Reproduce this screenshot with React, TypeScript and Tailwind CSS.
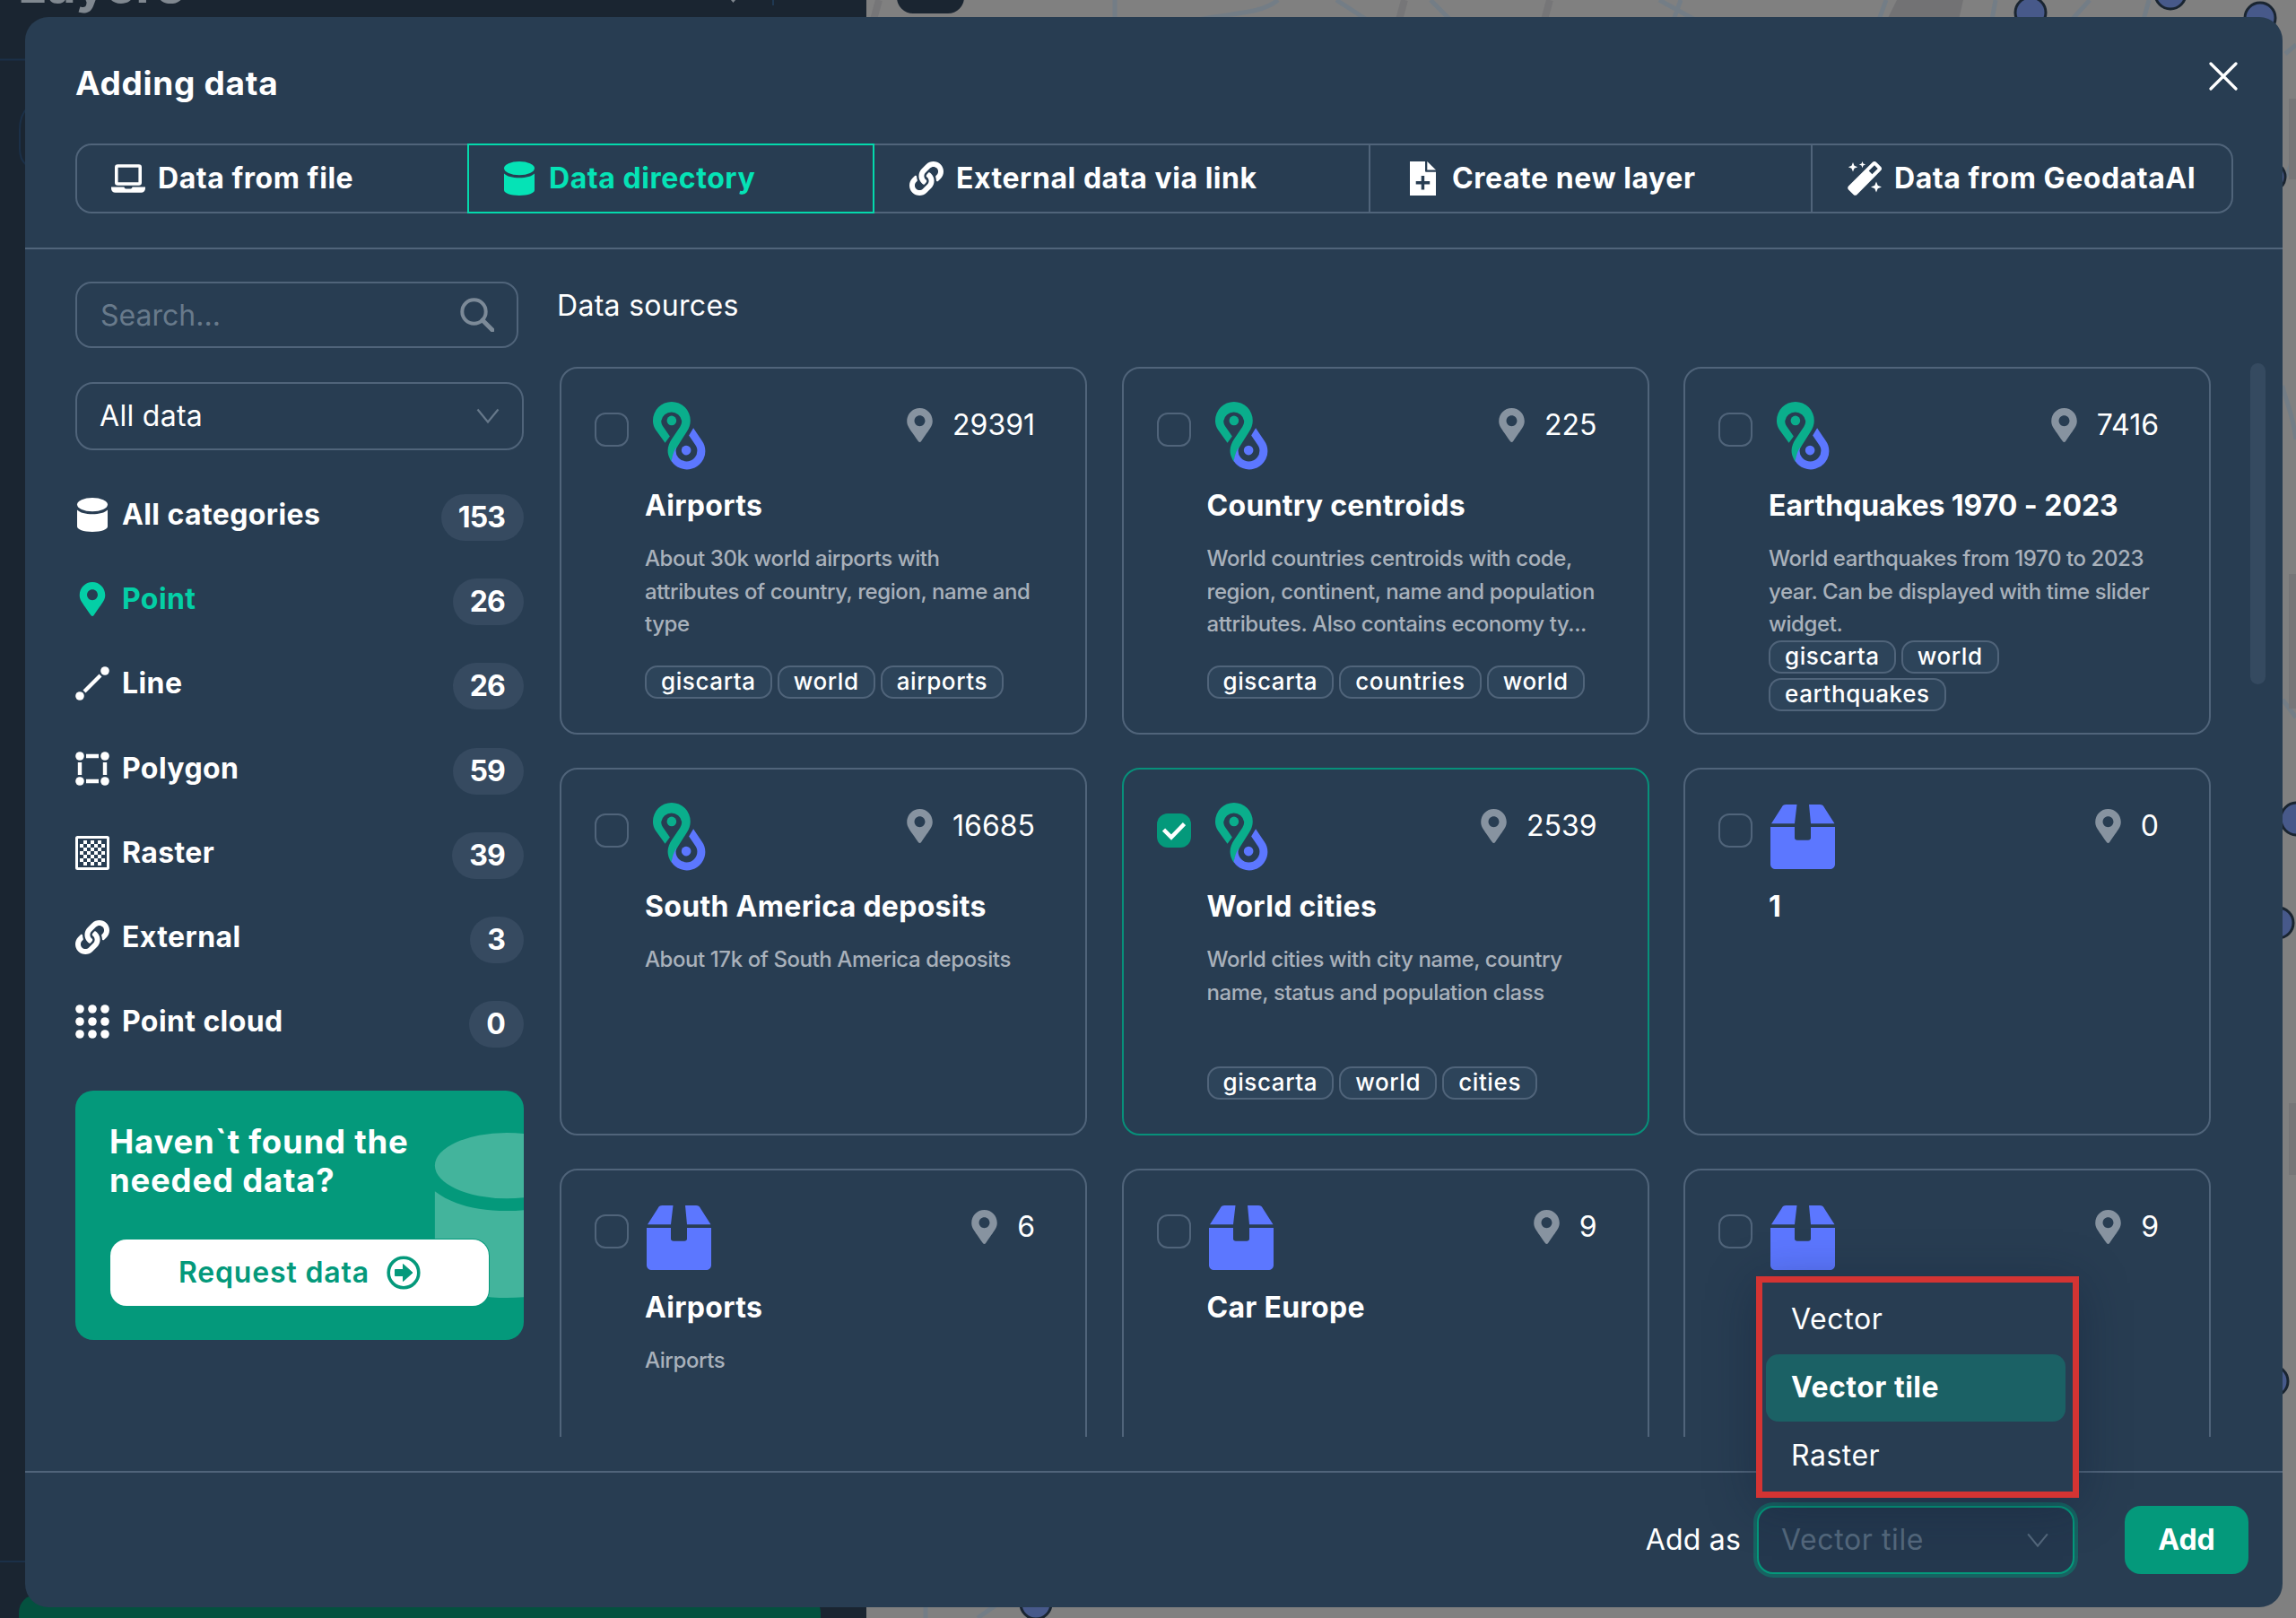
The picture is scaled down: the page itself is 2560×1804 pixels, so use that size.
import type { ReactNode } from 'react';
import clsx from 'clsx';
import { FaLink, FaMapMarkerAlt } from 'react-icons/fa';

type IconProps = { className?: string };

function DatabaseIcon({ className }: IconProps) {
  return (
    <svg className={className} viewBox="0 0 38 38" fill="currentColor">
      <ellipse cx="19" cy="7.6" rx="17" ry="7.6" />
      <path d="M2 13.5c3 3.200 9.500 4.800 17 4.800s14-1.600 17-4.800V32c0 3.200-7 6-17 6S2 35.200 2 32z" />
    </svg>
  );
}

function LaptopIcon({ className }: IconProps) {
  return (
    <svg className={className} viewBox="0 0 38 38">
      <rect x="5.800" y="5" width="26.400" height="20" rx="1.500" fill="none" stroke="currentColor" strokeWidth="3.600" />
      <path fill="currentColor" d="M0 28.500h14.500c0 1.300 1 2 2 2h5c1 0 2-.7 2-2H38V30c0 2.800-2 4.800-4.600 4.800H4.600C2 34.800 0 32.800 0 30z" />
    </svg>
  );
}

function FilePlusIcon({ className }: IconProps) {
  return (
    <svg className={className} viewBox="0 0 38 38" fill="currentColor">
      <path
        fillRule="evenodd"
        d="M5 0h17v10.500c0 .8.500 1.300 1.300 1.300H34V38H5zM17.700 16v6h-6v3.500h6v6h3.500v-6h6V22h-6v-6z"
      />
      <path d="M24.300 0 34 9.600h-9.700z" />
    </svg>
  );
}

function WandIcon({ className }: IconProps) {
  return (
    <svg className={className} viewBox="0 0 38 38" fill="currentColor">
      <path
        fillRule="evenodd"
        d="M28 .8c1.200-1.100 2.700-1.100 3.900 0l5.300 5.300c1.100 1.200 1.100 2.700 0 3.900L10.500 36.900c-1.200 1.200-2.700 1.200-3.900 0L1 31.400c-1.100-1.200-1.100-2.700 0-3.900zM30 4.300l-6.300 6.300 3.700 3.700 6.300-6.300z"
      />
      <path d="m6 1 1.500 3.700L11.200 6.200 7.500 7.700 6 11.400 4.500 7.700.8 6.200l3.700-1.500zM16.500 0l1 2.600 2.600 1-2.600 1-1 2.600-1-2.600-2.600-1 2.600-1zM32 22.500l1.700 4.300 4.300 1.700-4.300 1.700L32 34.500l-1.700-4.300L26 28.500l4.300-1.700z" />
    </svg>
  );
}

function LineIcon({ className }: IconProps) {
  return (
    <svg className={className} viewBox="0 0 38 38" fill="currentColor">
      <circle cx="5" cy="33" r="4.800" />
      <circle cx="33" cy="5" r="4.800" />
      <path d="M10 28 28 10" stroke="currentColor" strokeWidth="4.200" />
    </svg>
  );
}

function PolygonIcon({ className }: IconProps) {
  return (
    <svg className={className} viewBox="0 0 38 38" fill="currentColor">
      <circle cx="5" cy="5" r="4.800" />
      <circle cx="33" cy="5" r="4.800" />
      <circle cx="5" cy="33" r="4.800" />
      <circle cx="33" cy="33" r="4.800" />
      <path d="M12 5h14M12 33h14M5 12v14M33 12v14" stroke="currentColor" strokeWidth="4.400" />
    </svg>
  );
}

function RasterIcon({ className }: IconProps) {
  const cells: ReactNode[] = [];
  for (let row = 0; row < 7; row++) {
    for (let col = 0; col < 7; col++) {
      if ((row + col) % 2 === 1) {
        cells.push(<rect key={`${row}-${col}`} x={5 + col * 4} y={5 + row * 4} width="4" height="4" />);
      }
    }
  }
  return (
    <svg className={className} viewBox="0 0 38 38" fill="currentColor">
      <rect x="1.500" y="1.500" width="35" height="35" rx="1" fill="none" stroke="currentColor" strokeWidth="3" />
      {cells}
    </svg>
  );
}

function PointCloudIcon({ className }: IconProps) {
  return (
    <svg className={className} viewBox="0 0 38 38" fill="currentColor">
      {[5, 19, 33].map((y) => [5, 19, 33].map((x) => <circle key={`${x}-${y}`} cx={x} cy={y} r="4.800" />))}
    </svg>
  );
}

function SearchIcon({ className }: IconProps) {
  return (
    <svg className={className} viewBox="0 0 38 38" fill="none" stroke="currentColor" strokeWidth="4">
      <circle cx="15.500" cy="15.500" r="13.200" />
      <path d="m25 25 11 11" strokeWidth="5" strokeLinecap="round" />
    </svg>
  );
}

function ChevronIcon({ className }: IconProps) {
  return (
    <svg className={className} viewBox="0 0 26 18" fill="none" stroke="currentColor" strokeWidth="2.200">
      <path d="m1.500 1.500 11.500 14 11.500-14" />
    </svg>
  );
}

function ArrowCircleIcon({ className }: IconProps) {
  return (
    <svg className={className} viewBox="0 0 38 38">
      <circle cx="19" cy="19" r="16.800" fill="none" stroke="currentColor" strokeWidth="3.600" />
      <path d="M9.500 15.500h9v-6L29 19 18.500 28.500v-6h-9z" fill="currentColor" stroke="currentColor" strokeLinejoin="round" />
    </svg>
  );
}

function GiscartaLogo({ className }: IconProps) {
  return (
    <svg className={className} viewBox="40 36 182 232">
      <path
        fill="#0aae8c"
        d="M83 177 52 134c-6-9-10-20-10-32a63 63 0 0 1 126 0c0 14-5 26-12 37l-30 48c-12 20-17 34-22 53-8-13-12-26-12-37 0-14 6-27 13-38l28-42c4-6 6-13 6-20a35 35 0 0 0-69 0c0 7 2 13 6 19l23 33z"
      />
      <circle cx="105" cy="102" r="16" fill="#0aae8c" />
      <path
        fill="#5c77ff"
        d="m178 127 29 43c7 10 11 21 11 35A62 62 0 0 1 104 238c4-19 8-33 17-47-1 4-2 8-2 12a36 36 0 0 0 72 0c0-8-3-14-7-20l-21-31z"
      />
      <circle cx="154" cy="202" r="16" fill="#5c77ff" />
    </svg>
  );
}

function BoxIcon({ className }: IconProps) {
  return (
    <svg className={className} viewBox="0 0 72 78" preserveAspectRatio="none" fill="#5c77ff">
      <path d="M12.500 3.500C13.500 1 15 0 17.500 0h12l-2.500 23H1zM43 0h12c2.500 0 4 1 5 3.500L71.500 23H45z" />
      <path d="M0 27h27v13c0 2 1.200 3 3 3h12c1.800 0 3-1 3-3V27h27v45c0 3.500-2.500 6-6 6H6c-3.500 0-6-2.500-6-6z" />
    </svg>
  );
}

const tabs = [
  { label: 'Data from file', icon: LaptopIcon, width: 'w-[437px]' },
  { label: 'Data directory', icon: DatabaseIcon, width: 'w-[454px]', active: true },
  { label: 'External data via link', icon: FaLink, width: 'w-[553px]' },
  { label: 'Create new layer', icon: FilePlusIcon, width: 'w-[493px]' },
  { label: 'Data from GeodataAI', icon: WandIcon, width: 'flex-1' },
];

const categories = [
  { label: 'All categories', count: 153, icon: DatabaseIcon },
  { label: 'Point', count: 26, icon: FaMapMarkerAlt, active: true },
  { label: 'Line', count: 26, icon: LineIcon },
  { label: 'Polygon', count: 59, icon: PolygonIcon },
  { label: 'Raster', count: 39, icon: RasterIcon },
  { label: 'External', count: 3, icon: FaLink },
  { label: 'Point cloud', count: 0, icon: PointCloudIcon },
];

type Source = {
  title: string;
  count: number;
  kind: 'giscarta' | 'box';
  description?: string[];
  tags?: string[];
  selected?: boolean;
};

const sources: Source[] = [
  {
    title: 'Airports',
    count: 29391,
    kind: 'giscarta',
    description: ['About 30k world airports with', 'attributes of country, region, name and', 'type'],
    tags: ['giscarta', 'world', 'airports'],
  },
  {
    title: 'Country centroids',
    count: 225,
    kind: 'giscarta',
    description: [
      'World countries centroids with code,',
      'region, continent, name and population',
      'attributes. Also contains economy ty...',
    ],
    tags: ['giscarta', 'countries', 'world'],
  },
  {
    title: 'Earthquakes 1970 - 2023',
    count: 7416,
    kind: 'giscarta',
    description: ['World earthquakes from 1970 to 2023', 'year. Can be displayed with time slider', 'widget.'],
    tags: ['giscarta', 'world', 'earthquakes'],
  },
  { title: 'South America deposits', count: 16685, kind: 'giscarta', description: ['About 17k of South America deposits'] },
  {
    title: 'World cities',
    count: 2539,
    kind: 'giscarta',
    description: ['World cities with city name, country', 'name, status and population class'],
    tags: ['giscarta', 'world', 'cities'],
    selected: true,
  },
  { title: '1', count: 0, kind: 'box' },
  { title: 'Airports', count: 6, kind: 'box', description: ['Airports'] },
  { title: 'Car Europe', count: 9, kind: 'box' },
  { title: '', count: 9, kind: 'box' },
];

function SourceCard({ title, count, kind, description = [], tags = [], selected }: Source) {
  return (
    <div
      className={clsx(
        'flex h-[410px] flex-col rounded-[20px] border-2 pl-[37px]',
        selected ? 'border-[#07907a]' : 'border-[#50647a]',
      )}
    >
      <div className="flex h-[132px] shrink-0 items-start">
        <span
          className={clsx(
            'mt-[49px] flex size-[38px] items-center justify-center rounded-[12px]',
            selected ? 'bg-[#04997b]' : 'border-2 border-[#50647a]',
          )}
        >
          {selected && (
            <svg className="size-[26px]" viewBox="0 0 26 26" fill="none" stroke="#fff" strokeWidth="4.500">
              <path d="m1.500 12 8.500 8.500L24.500 5.500" />
            </svg>
          )}
        </span>
        {kind === 'giscarta' ? (
          <GiscartaLogo className="mt-[36px] ml-[26px] h-[77px] w-[61px]" />
        ) : (
          <BoxIcon className="mt-[39px] ml-[20px] h-[72px] w-[72px]" />
        )}
        <div className="mt-[41px] mr-[56px] ml-auto flex h-[43px] items-center gap-[22px]">
          <FaMapMarkerAlt className="h-[38px] w-[29px] text-[#8793a0]" />
          <span className="text-[32px]">{count}</span>
        </div>
      </div>
      <div className="ml-[56px] flex flex-col">
        <h3
          className={clsx(
            'h-[60px] pt-px text-[32px] leading-[40px] font-bold whitespace-nowrap',
            title.length > 22 ? 'tracking-[-0.050px]' : 'tracking-[0.3px]',
          )}
        >
          {title}
        </h3>
        <div className="h-[111px] pt-[2px] text-[24px] leading-[36.700px] font-medium tracking-[-0.42px] text-[#a9b1bb]">
          {description.map((line) => (
            <p key={line} className="whitespace-nowrap">
              {line}
            </p>
          ))}
        </div>
        <div className="flex min-h-[65px] w-[430px] flex-wrap content-end gap-x-[6px] gap-y-[5px]">
          {tags.map((tag) => (
            <span
              key={tag}
              className="flex h-[37px] items-center rounded-[14px] border-2 border-[#50647a] bg-[#2d445a] px-[16px] pb-[3px] text-[26px] font-medium tracking-[0.6px]"
            >
              {tag}
            </span>
          ))}
        </div>
      </div>
    </div>
  );
}

function MapBackdrop() {
  return (
    <svg className="absolute inset-0 h-full w-full" viewBox="0 0 2560 1804">
      <rect width="2560" height="1804" fill="#1a2531" />
      <path d="M0 66.500h40M0 1741h40M60 110c-28 0-38 16-38 34v22c0 16 10 24 30 24" fill="none" stroke="#1b3048" strokeWidth="2" />
      <path d="M862 0v6" stroke="#1f3852" strokeWidth="2" />
      <path d="M815 0h5l-2.500 3z" fill="#808890" />
      <rect x="966" width="1594" height="1804" fill="#808080" />
      <path d="M2115 0h74l-5 22h-80z" fill="#727274" />
      <g fill="none" stroke="#737d86" strokeWidth="5">
        <path d="M1243 0v20M1335 22c40-8 70-6 90-22M1490 0l34 22M1595 0l22 22M1850 0l40 22M1866 22l8-22M2095 22l8-22M2225 0l-4 22M2310 22l20-22M2390 22l6-22" />
        <path d="M2548 60l12-10M2545 200c10-10 10-20 15-40M2545 430c4 20 10 25 15 60M2545 780l15 20M2545 920h15M1032 1790v14M1110 1790l-20 14" />
      </g>
      <g fill="none" stroke="#767678" strokeWidth="8">
        <path d="M1560 22l6-22M1722 22l6-22M980 0l-6 22M2556 110v90M2556 640v150M2556 1230v80" />
      </g>
      <rect x="1000" y="-40" width="75" height="55" rx="18" fill="#1a2531" />
      <rect x="21" y="1778" width="894" height="60" rx="20" fill="#04513f" />
      <g fill="#47598a" stroke="#1a2531" strokeWidth="3">
        <circle cx="2264" cy="14" r="17" />
        <circle cx="2420" cy="-7" r="17" />
        <circle cx="2520" cy="20" r="17" />
        <circle cx="2561" cy="913" r="18" />
        <circle cx="2540" cy="1029" r="17" />
        <circle cx="2532" cy="197" r="16" />
        <circle cx="2534" cy="1540" r="17" />
        <circle cx="1155" cy="1788" r="17" />
      </g>
    </svg>
  );
}

export default function App() {
  return (
    <div className="relative h-[1804px] w-[2560px] overflow-hidden bg-[#1a2531] font-['Inter',sans-serif] text-white">
      <MapBackdrop />
      <div className="absolute -top-[51px] left-[20px] text-[56px] leading-[68px] font-bold tracking-[0.5px] text-[#808890]">
        Layers
      </div>

      <div className="absolute top-[19px] left-[28px] flex h-[1773px] w-[2517px] flex-col rounded-[26px] bg-[#283d52]">
        <header className="h-[259px] shrink-0 border-b-2 border-[#50647a] pr-[55px] pl-[56px]">
          <div className="flex h-[141px] items-start justify-between">
            <h1 className="mt-[50px] text-[37px] leading-[48px] font-bold tracking-[0.7px]">Adding data</h1>
            <svg className="mt-[50px] -mr-[5px] size-[32px]" viewBox="0 0 32 32" stroke="#fff" strokeWidth="3.200" strokeLinecap="round">
              <path d="m2 2 28 28M30 2 2 30" />
            </svg>
          </div>
          <nav className="flex h-[78px]">
            {tabs.map(({ label, icon: Icon, width, active }, index) => (
              <div
                key={label}
                className={clsx(
                  'flex items-center gap-[14px] border-y-2 text-[32px] font-bold tracking-[0.550px] whitespace-nowrap',
                  width,
                  active ? 'border-x-2 border-[#04d9ac] pl-[37px] text-[#05e3b6]' : 'border-[#50647a]',
                  !active && (index === 0 ? 'rounded-l-[18px] border-l-2 pl-[38px]' : 'pl-[39px]'),
                  index > 1 && 'border-r-2',
                  index === tabs.length - 1 && 'rounded-r-[18px]',
                )}
              >
                <Icon className="size-[38px] shrink-0" />
                {label}
              </div>
            ))}
          </nav>
        </header>

        <div className="flex h-[1362px] shrink-0 pl-[56px]">
          <aside className="w-[500px] shrink-0 pt-[36px]">
            <div className="flex h-[74px] w-[494px] items-center justify-between rounded-[18px] border-2 border-[#50647a] pr-[25px] pl-[26px] text-[32px] text-[#687a8b]">
              <span className="pt-[2px]">Search...</span>
              <SearchIcon className="size-[38px] text-[#7c8a98]" />
            </div>
            <div className="mt-[38px] flex h-[76px] items-center justify-between rounded-[20px] border-2 border-[#50647a] pr-[25px] pl-[25px] text-[32px] tracking-[0.3px]">
              All data
              <ChevronIcon className="h-[18px] w-[26px] text-[#66788a]" />
            </div>
            <div className="mt-[28px]">
              {categories.map(({ label, count, icon: Icon, active }) => (
                <div key={label} className="flex h-[94.200px] items-center justify-between text-[32px] font-bold">
                  <div className={clsx('flex items-center gap-[14px] pb-[6px] tracking-[0.4px]', active && 'text-[#04cfa6]')}>
                    <Icon className="size-[38px]" />
                    {label}
                  </div>
                  <span className="flex h-[52px] items-center rounded-full bg-[#364a60] pr-[21px] pl-[19px] tracking-[-0.9px]">{count}</span>
                </div>
              ))}
            </div>
            <div className="relative mt-[27px] h-[278px] overflow-hidden rounded-[20px] bg-[#04997b] pt-[36px] pl-[38px]">
              <svg className="absolute top-[47px] left-[400px] h-[184px] w-[162px]" viewBox="0 0 162 186" fill="#43b49c">
                <ellipse cx="81" cy="37" rx="81" ry="37" />
                <path d="M0 66c18 14 46 22 81 22s63-8 81-22v90c0 17-36 30-81 30S0 173 0 156z" />
              </svg>
              <p className="relative text-[36.500px] leading-[43px] font-bold tracking-[0.8px] whitespace-nowrap">
                Haven`t found the
                <br />
                needed data?
              </p>
              <div className="relative mt-[44px] ml-px flex h-[74px] w-[422px] items-center justify-center gap-[19px] rounded-[18px] bg-white text-[32px] font-semibold tracking-[0.850px] text-[#04997b] shadow-[0_0_0_1px_#04997b]">
                Request data
                <ArrowCircleIcon className="size-[38px]" />
              </div>
            </div>
          </aside>

          <section className="ml-[37px] flex-1 pt-[43px]">
            <h2 className="h-[84px] text-[32px] leading-[40px] tracking-[0.3px]">Data sources</h2>
            <div className="ml-[3px] flex h-[1197px] items-start justify-between overflow-hidden pr-[19px]">
              <div className="grid grid-cols-[588px_588px_588px] gap-x-[38.500px] gap-y-[37px] pt-[4px]">
                {sources.map((source, index) => (
                  <SourceCard key={index} {...source} />
                ))}
              </div>
              <div className="h-[358px] w-[17px] rounded-full bg-[#354a60]" />
            </div>
          </section>
        </div>

        <footer className="flex flex-1 items-center justify-end border-t-2 border-[#50647a] pr-[38px] text-[32px]">
          <span className="mr-[18px] tracking-[0.2px]">Add as</span>
          <div className="flex h-[76px] w-[354px] items-center justify-between rounded-[18px] border-2 border-[#04997b] bg-[#24384e] pr-[26px] pl-[25px] tracking-[0.6px] text-[#54687c] shadow-[0_0_0_4px_#176362]">
            Vector tile
            <ChevronIcon className="h-[17px] w-[26px]" />
          </div>
          <div className="ml-[56px] flex h-[76px] w-[138px] items-center justify-center rounded-[18px] bg-[#04997b] font-bold">Add</div>
        </footer>
      </div>

      <div className="absolute top-[1423px] left-[1958px] h-[247px] w-[360px] border-[7px] border-[#d43433] bg-[#283d52] pt-[5px] pl-[4px] text-[32px] shadow-[0_8px_50px_rgba(15,30,55,0.4)]">
        <div className="flex h-[75px] w-[334px] items-center pb-[3px] pl-[28px] tracking-[0.6px]">Vector</div>
        <div className="flex h-[75px] w-[334px] items-center rounded-[14px] bg-[#1b6165] pb-px pl-[28px] font-bold tracking-[0.5px]">
          Vector tile
        </div>
        <div className="flex h-[75px] w-[334px] items-center pl-[28px] tracking-[0.5px]">Raster</div>
      </div>
    </div>
  );
}
